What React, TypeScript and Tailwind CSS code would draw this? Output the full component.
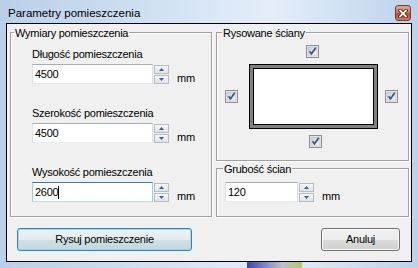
import React from 'react';

function SpinButton({ up }: { up?: boolean }) {
  return (
    <div className="h-[9px] border border-[#b9bcc2] bg-[linear-gradient(to_bottom,#f6f7f9,#dfe3e8)] flex items-center justify-center">
      <svg width="5" height="3" viewBox="0 0 5 3">
        <path d={up ? 'M0 3L2.5 0L5 3Z' : 'M0 0L2.5 3L5 0Z'} fill="#3e5c9a" />
      </svg>
    </div>
  );
}

function Spinner() {
  return (
    <div className="ml-[1px] mt-[1px] w-[15px] flex flex-col gap-[1px]">
      <SpinButton up />
      <SpinButton />
    </div>
  );
}

function NumberBox({ value, width, focused }: { value: string; width: string; focused?: boolean }) {
  return (
    <div
      className={`${width} h-[20px] border bg-white pl-[2px] leading-[18px] flex items-center ${
        focused
          ? 'border-t-[#3d7bad] border-x-[#a4c9e3] border-b-[#b7d9ed]'
          : 'border-t-[#abadb3] border-x-[#dbdfe6] border-b-[#e3e9ef]'
      }`}
    >
      <span>{value}</span>
      {focused && <span className="w-[1px] h-[13px] bg-black" />}
    </div>
  );
}

function Field({ label, value, focused }: { label: string; value: string; focused?: boolean }) {
  return (
    <div className="flex flex-col">
      <div className="h-[13px] leading-[13px]">{label}</div>
      <div className="mt-[3px] flex items-start">
        <NumberBox value={value} width="w-[121px]" focused={focused} />
        <Spinner />
        <span className="ml-[8px] mt-[8px] leading-[13px]">mm</span>
      </div>
    </div>
  );
}

function Check() {
  return (
    <svg width="13" height="13" viewBox="0 0 13 13" className="shrink-0">
      <defs>
        <linearGradient id="cbg" x1="0" y1="0" x2="1" y2="1">
          <stop offset="0" stopColor="#c9ced6" />
          <stop offset="1" stopColor="#f4f5f7" />
        </linearGradient>
      </defs>
      <rect x="0.5" y="0.5" width="12" height="12" fill="#f4f4f4" stroke="#8e8f8f" />
      <rect x="2" y="2" width="9" height="9" fill="url(#cbg)" stroke="#b0b6c0" strokeWidth="0.6" />
      <path d="M3.5 6.3L5.4 8.8L9.8 2.8" fill="none" stroke="#3a4f8c" strokeWidth="1.6" />
    </svg>
  );
}

function CloseButton() {
  return (
    <div className="mt-[5px] w-[16px] h-[16px] rounded-[3px] border border-[#7a3b2e] bg-[linear-gradient(to_bottom,#e8a593,#d57a63_45%,#c24a2e_55%,#d2785d)] flex items-center justify-center">
      <svg width="10" height="9" viewBox="0 0 10 9">
        <path d="M2 1.5L8 7.5M8 1.5L2 7.5" stroke="#3b1c15" strokeWidth="3.4" strokeLinecap="square" />
        <path d="M2 1.5L8 7.5M8 1.5L2 7.5" stroke="#ffffff" strokeWidth="1.8" strokeLinecap="square" />
      </svg>
    </div>
  );
}

export default function App() {
  return (
    <div className="w-[418px] h-[268px] flex flex-col bg-[linear-gradient(to_right,#b9d0ea,#cfe0f2_35%,#e4eef9_65%,#bcd3ec)] font-['Liberation_Sans',Arial,sans-serif] text-[11px] tracking-[-0.25px] text-black select-none">
      {/* Title bar */}
      <div className="h-[23px] flex items-start justify-between pl-[8px] pr-[7px]">
        <span className="mt-[6px] text-[11.5px] leading-[14px] tracking-normal">Parametry pomieszczenia</span>
        <CloseButton />
      </div>

      <div className="flex pl-[6px]">
        {/* Client area */}
        <div className="w-[406px] h-[239px] border border-black bg-[#f0f0f0] flex flex-col">
          <div className="mt-[8px] ml-[3px] flex gap-[4px]">
            {/* Wymiary pomieszczenia */}
            <div className="relative w-[202px] h-[185px] border border-[#a0a0a0] shadow-[1px_1px_0_#fff,inset_1px_1px_0_#fff] pl-[21px] pt-[15px] flex flex-col gap-[22px]">
              <span className="absolute -top-[6px] left-[3px] px-[1px] bg-[#f0f0f0] leading-[13px]">Wymiary pomieszczenia</span>
              <Field label="Długość pomieszczenia" value="4500" />
              <Field label="Szerokość pomieszczenia" value="4500" />
              <Field label="Wysokość pomieszczenia" value="2600" focused />
            </div>

            <div className="flex flex-col">
              {/* Rysowane ściany */}
              <div className="relative w-[193px] h-[129px] border border-[#a0a0a0] shadow-[1px_1px_0_#fff,inset_1px_1px_0_#fff] flex flex-col">
                <span className="absolute -top-[6px] left-[5px] px-[1px] bg-[#f0f0f0] leading-[13px]">Rysowane ściany</span>
                <div className="mt-[12px] ml-[89px]">
                  <Check />
                </div>
                <div className="mt-[6px] ml-[8px] flex items-center">
                  <Check />
                  <div className="ml-[11px] w-[129px] h-[65px] border border-black bg-[#808080] p-[3px]">
                    <div className="w-full h-full border border-black bg-white" />
                  </div>
                  <div className="ml-[7px]">
                    <Check />
                  </div>
                </div>
                <div className="mt-[6px] ml-[92px]">
                  <Check />
                </div>
              </div>

              {/* Grubość ścian */}
              <div className="relative mt-[7px] w-[193px] h-[49px] border border-[#a0a0a0] shadow-[1px_1px_0_#fff,inset_1px_1px_0_#fff] pl-[8px] pt-[13px] flex items-start">
                <span className="absolute -top-[6px] left-[6px] px-[1px] bg-[#f0f0f0] leading-[13px]">Grubość ścian</span>
                <NumberBox value="120" width="w-[73px]" />
                <Spinner />
                <span className="ml-[8px] mt-[8px] leading-[13px]">mm</span>
              </div>
            </div>
          </div>

          {/* Buttons */}
          <div className="mt-[11px] pl-[10px] pr-[11px] flex justify-between">
            <button className="w-[175px] h-[23px] rounded-[3px] border border-[#3c7fb1] shadow-[inset_0_0_0_1px_#9fd8f5] bg-[linear-gradient(to_bottom,#eef4f7_0%,#e2ebf0_50%,#d1e0e8_50%,#c3d6df_100%)] leading-[13px]">
              Rysuj pomieszczenie
            </button>
            <button className="w-[79px] h-[23px] rounded-[3px] border border-[#707070] shadow-[inset_0_0_0_1px_#fbfbfb] bg-[linear-gradient(to_bottom,#f2f2f2_0%,#ebebeb_50%,#dddddd_50%,#cfcfcf_100%)] leading-[13px]">
              Anuluj
            </button>
          </div>
        </div>
      </div>

      {/* Bottom frame */}
      <div className="h-[6px] flex">
        <div className="ml-[247px] w-[55px] h-full bg-[linear-gradient(to_right,#3f46a8,#8d95c8_40%,#b9c4c8_65%,#b7c46a)]" />
      </div>
    </div>
  );
}
